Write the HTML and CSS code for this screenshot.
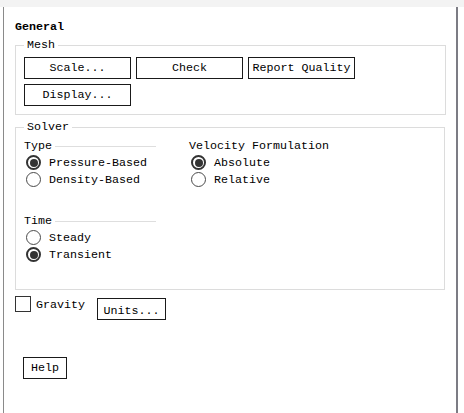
FILE: index.html
```html
<!DOCTYPE html>
<html>
<head>
<meta charset="utf-8">
<link rel="stylesheet" href="styles.css">
</head>
<body>
<div class="topbar"></div>
<div class="panel">
  <div class="title">General</div>
  <fieldset class="group mesh">
    <legend>Mesh</legend>
    <div class="btn-grid">
      <button class="btn">Scale...</button>
      <button class="btn">Check</button>
      <button class="btn">Report Quality</button>
      <button class="btn">Display...</button>
    </div>
  </fieldset>
  <fieldset class="group solver">
    <legend>Solver</legend>
    <div class="solver-cols">
      <div class="col col-left">
        <div class="section">
          <div class="sec-label"><span>Type</span><span class="rule"></span></div>
          <div class="radio checked"><span class="circle"></span><span class="rlabel">Pressure-Based</span></div>
          <div class="radio"><span class="circle"></span><span class="rlabel">Density-Based</span></div>
        </div>
        <div class="section time">
          <div class="sec-label"><span>Time</span><span class="rule"></span></div>
          <div class="radio"><span class="circle"></span><span class="rlabel">Steady</span></div>
          <div class="radio checked"><span class="circle"></span><span class="rlabel">Transient</span></div>
        </div>
      </div>
      <div class="col col-right">
        <div class="section">
          <div class="sec-label"><span>Velocity Formulation</span></div>
          <div class="radio checked"><span class="circle"></span><span class="rlabel">Absolute</span></div>
          <div class="radio"><span class="circle"></span><span class="rlabel">Relative</span></div>
        </div>
      </div>
    </div>
  </fieldset>
  <div class="gravity-row">
    <span class="checkbox"></span>
    <span class="gravity-label">Gravity</span>
    <button class="btn small units">Units...</button>
  </div>
  <div class="help-row">
    <button class="btn small help">Help</button>
  </div>
</div>
</body>
</html>
```

FILE: styles.css
```css
* { box-sizing: border-box; }
html, body {
  margin: 0;
  padding: 0;
  background: #ffffff;
}
body {
  font-family: "Liberation Mono", "DejaVu Sans Mono", monospace;
  font-size: 11.67px;
  line-height: 14px;
  color: #000000;
  width: 464px;
  height: 413px;
  overflow: hidden;
}
.topbar {
  height: 7px;
  background: #f3f3f3;
}
.panel {
  margin-left: 3px;
  width: 455px;
  height: 406px;
  border-left: 1px solid #8a8a8a;
  border-right: 2px solid #7c7c84;
  padding: 13px 0 0 11px;
}
.title {
  font-weight: bold;
  height: 14px;
}
.group {
  margin: 0;
  width: 431px;
  border: 1px solid #dcdcdc;
  min-inline-size: 0;
}
.group legend {
  padding: 0 3px;
  line-height: 14px;
}
.mesh {
  margin-top: 4px;
  padding: 5px 8px 8px 8px;
}
.btn-grid {
  display: grid;
  grid-template-columns: repeat(3, 107px);
  grid-auto-rows: 22px;
  gap: 5px;
}
.btn {
  font-family: inherit;
  font-size: 11.67px;
  line-height: 14px;
  color: #000000;
  background: #ffffff;
  border: 1px solid #1a1a1a;
  border-radius: 0;
  padding: 0;
  margin: 0;
  height: 22px;
  text-align: center;
}
.solver {
  margin-top: 5px;
  width: 430px;
  padding: 5px 8px 26px 8px;
}
.solver-cols {
  display: flex;
}
.col-left {
  width: 132px;
}
.col-right {
  margin-left: 33px;
}
.sec-label {
  display: flex;
  align-items: center;
  height: 14px;
  margin-bottom: 1px;
}
.rule {
  flex: 1;
  height: 1px;
  background: #dedede;
  margin-left: 3px;
}
.time {
  margin-top: 26px;
}
.radio {
  display: flex;
  align-items: center;
  height: 17px;
}
.circle {
  width: 15px;
  height: 15px;
  margin-left: 2px;
  border: 1px solid #4a4a4a;
  border-radius: 50%;
  background: #ffffff;
  display: flex;
  align-items: center;
  justify-content: center;
}
.radio.checked .circle {
  border: 2px solid #333333;
}
.radio.checked .circle::after {
  content: "";
  width: 8px;
  height: 8px;
  border-radius: 50%;
  background: #333333;
}
.rlabel {
  margin-left: 8px;
}
.gravity-row {
  display: flex;
  align-items: flex-start;
  margin-top: 6px;
}
.checkbox {
  width: 16px;
  height: 16px;
  border: 1px solid #333333;
  background: #ffffff;
}
.gravity-label {
  margin-top: 2px;
  margin-left: 5px;
}
.units {
  margin-top: 2px;
  margin-left: 12px;
  width: 69px;
  padding-top: 3px;
}
.help-row {
  margin-top: 37px;
  padding-left: 8px;
}
.help {
  width: 44px;
}
```
